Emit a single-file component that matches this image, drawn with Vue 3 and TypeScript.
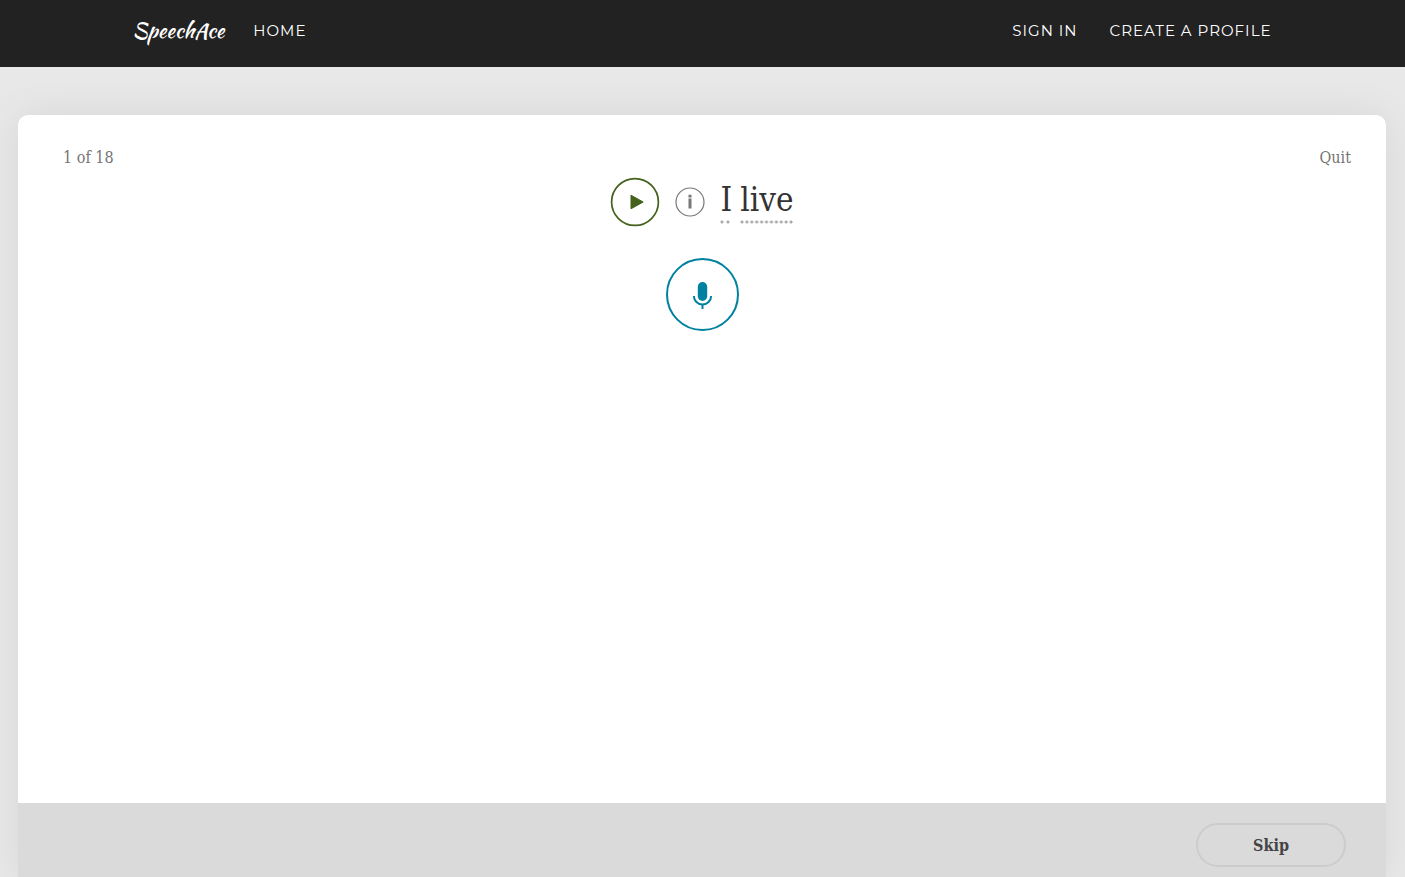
<script setup lang="ts">
import { ref } from 'vue'

interface NavLink {
  label: string
  href: string
}

const accountLinks: NavLink[] = [
  { label: 'SIGN IN', href: '#sign-in' },
  { label: 'CREATE A PROFILE', href: '#create-profile' },
]
const words: string[] = ['I', 'live']
const current = ref(1)
const total = 18
</script>

<template>
  <div class="page">
    <header class="topbar">
      <nav class="nav">
        <a class="brand" href="#">SpeechAce</a>
        <a class="nav-link" href="#home">HOME</a>
        <div class="account">
          <a v-for="link in accountLinks" :key="link.label" class="nav-link" :href="link.href">{{ link.label }}</a>
        </div>
      </nav>
    </header>

    <main class="card">
      <div class="card-head">
        <span>{{ current }} of {{ total }}</span>
        <a class="quit" href="#quit">Quit</a>
      </div>

      <section class="exercise">
        <div class="prompt">
          <button class="icon-button" type="button" aria-label="Play">
            <svg width="50" height="50" viewBox="0 0 50 50">
              <circle cx="25" cy="25" r="23.4" fill="none" stroke="#44621b" stroke-width="1.7" />
              <path d="M21 18.2 L33.2 25 L21 31.8 Z" fill="#44621b" stroke="#44621b" stroke-width="1" stroke-linejoin="round" />
            </svg>
          </button>
          <button class="icon-button" type="button" aria-label="Information">
            <svg width="30" height="30" viewBox="0 0 30 30">
              <circle cx="15" cy="15" r="14" fill="none" stroke="#777" stroke-width="1.2" />
              <path d="M13.5 7.8h3v2.6h-3zM13.5 11.4h3v10.2h-3z" fill="#777" />
            </svg>
          </button>
          <p class="sentence">
            <span v-for="word in words" :key="word" class="word">{{ word }}</span>
          </p>
        </div>
        <button class="icon-button" type="button" aria-label="Record">
          <svg width="75" height="75" viewBox="0 0 75 75">
            <circle cx="37.5" cy="37.5" r="35.5" fill="none" stroke="#0081a0" stroke-width="2" />
            <rect x="32.8" y="25" width="9.4" height="19" rx="4.7" fill="#0081a0" />
            <path d="M28.9 39 a8.6 8.6 0 0 0 17.2 0" fill="none" stroke="#0081a0" stroke-width="2" />
            <path d="M37.5 47v5" stroke="#0081a0" stroke-width="2" />
          </svg>
        </button>
      </section>

      <footer class="card-foot">
        <button class="skip" type="button">Skip</button>
      </footer>
    </main>
  </div>
</template>

<style>
body {
  margin: 0;
  background: #e8e8e8;
}
</style>

<style scoped>
.page {
  display: flex;
  flex-direction: column;
  min-height: 100vh;
  background: #e8e8e8;
  font-family: "Roboto Slab", "DejaVu Serif Condensed", "DejaVu Serif", serif;
}
.topbar {
  height: 67px;
  background: #222;
}
.nav {
  display: flex;
  align-items: center;
  box-sizing: border-box;
  max-width: 1170px;
  height: 62px;
  margin: 0 auto;
  padding: 0 16px 0 15px;
}
.brand {
  margin-right: 29px;
  color: #fff;
  font: 400 21px/32px "Kaushan Script", Lato, cursive;
  text-decoration: none;
}
.nav-link {
  color: #fff;
  font: 400 15px/20px Montserrat, Lato, sans-serif;
  letter-spacing: 1px;
  text-decoration: none;
}
.account {
  display: flex;
  gap: 32px;
  margin-left: auto;
}
.card {
  display: flex;
  flex: 1;
  flex-direction: column;
  margin: 48px 19px 0 18px;
  border-radius: 10px 10px 0 0;
  background: #fff;
  box-shadow: 0 0 40px rgba(0, 0, 0, 0.08);
}
.card-head {
  display: flex;
  justify-content: space-between;
  padding: 31px 35px 0 45px;
  color: #757575;
  font-size: 16px;
  line-height: 24px;
}
.quit {
  color: inherit;
  text-decoration: none;
}
.exercise {
  display: flex;
  flex: 1;
  flex-direction: column;
  align-items: center;
  gap: 30px;
  padding-top: 7px;
}
.prompt {
  display: flex;
  align-items: center;
  gap: 15px;
}
.icon-button {
  display: block;
  padding: 0;
  border: 0;
  border-radius: 50%;
  background: none;
  cursor: pointer;
}
.icon-button svg {
  display: block;
}
.sentence {
  display: flex;
  gap: 8px;
  margin: 0;
  color: #333;
  font-size: 33px;
  line-height: 38px;
}
.word {
  padding-bottom: 5px;
  background: radial-gradient(circle at 2px 2px, #aaa 1px, transparent 2px) left bottom / 5px 4px round no-repeat;
}
.card-foot {
  display: flex;
  justify-content: flex-end;
  padding: 20px 40px 10px;
  background: #dadada;
}
.skip {
  width: 150px;
  height: 44px;
  border: 2px solid #ccc;
  border-radius: 22px;
  background: transparent;
  color: #444;
  font: inherit;
  font-size: 16px;
  font-weight: 700;
  cursor: pointer;
}
</style>
